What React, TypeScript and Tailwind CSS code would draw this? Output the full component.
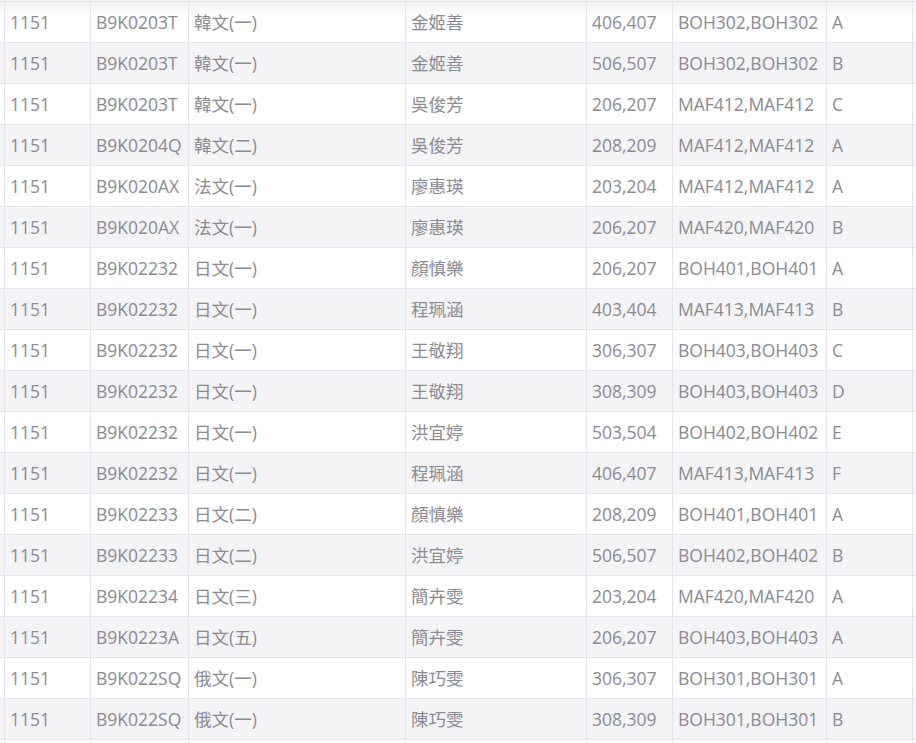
import React from "react";

type Row = [string, string, string, string, string, string, string];

const rows: Row[] = [
  ["1151", "B9K0203T", "韓文(一)", "金姬善", "406,407", "BOH302,BOH302", "A"],
  ["1151", "B9K0203T", "韓文(一)", "金姬善", "506,507", "BOH302,BOH302", "B"],
  ["1151", "B9K0203T", "韓文(一)", "吳俊芳", "206,207", "MAF412,MAF412", "C"],
  ["1151", "B9K0204Q", "韓文(二)", "吳俊芳", "208,209", "MAF412,MAF412", "A"],
  ["1151", "B9K020AX", "法文(一)", "廖惠瑛", "203,204", "MAF412,MAF412", "A"],
  ["1151", "B9K020AX", "法文(一)", "廖惠瑛", "206,207", "MAF420,MAF420", "B"],
  ["1151", "B9K02232", "日文(一)", "顏慎樂", "206,207", "BOH401,BOH401", "A"],
  ["1151", "B9K02232", "日文(一)", "程珮涵", "403,404", "MAF413,MAF413", "B"],
  ["1151", "B9K02232", "日文(一)", "王敬翔", "306,307", "BOH403,BOH403", "C"],
  ["1151", "B9K02232", "日文(一)", "王敬翔", "308,309", "BOH403,BOH403", "D"],
  ["1151", "B9K02232", "日文(一)", "洪宜婷", "503,504", "BOH402,BOH402", "E"],
  ["1151", "B9K02232", "日文(一)", "程珮涵", "406,407", "MAF413,MAF413", "F"],
  ["1151", "B9K02233", "日文(二)", "顏慎樂", "208,209", "BOH401,BOH401", "A"],
  ["1151", "B9K02233", "日文(二)", "洪宜婷", "506,507", "BOH402,BOH402", "B"],
  ["1151", "B9K02234", "日文(三)", "簡卉雯", "203,204", "MAF420,MAF420", "A"],
  ["1151", "B9K0223A", "日文(五)", "簡卉雯", "206,207", "BOH403,BOH403", "A"],
  ["1151", "B9K022SQ", "俄文(一)", "陳巧雯", "306,307", "BOH301,BOH301", "A"],
  ["1151", "B9K022SQ", "俄文(一)", "陳巧雯", "308,309", "BOH301,BOH301", "B"],
  ["", "", "", "", "", "", ""],
];

// column widths incl. right border; a sliver of the previous column on the left
const widths = ["w-[86px]", "w-[98px]", "w-[217px]", "w-[181px]", "w-[86px]", "w-[154px]", "w-[86px]"];

export default function App() {
  return (
    <div
      className="relative h-[743px] w-[916px] overflow-hidden bg-white text-[17.5px] text-[#8a8a92]"
      style={{ fontFamily: '"Segoe UI", "Open Sans", "Noto Sans CJK TC", sans-serif' }}
    >
      <div className="border-t border-[#dcdce3] mt-px">
        {rows.map((r, i) => (
          <div
            key={i}
            className={`flex h-[41px] border-b border-[#e4e4ea] ${i % 2 === 1 ? "bg-[#f4f4f6]" : "bg-white"}`}
          >
            <div className="w-[5px] shrink-0 border-r border-[#e4e4ea]" />
            {r.map((c, j) => (
              <div
                key={j}
                className={`${widths[j]} shrink-0 border-r border-[#e4e4ea] pl-[5px] flex items-center whitespace-nowrap overflow-hidden`}
              >
                {c}
              </div>
            ))}
            <div className="flex-1" />
          </div>
        ))}
      </div>
      {/* header shadow */}
      <div className="pointer-events-none absolute left-0 right-0 top-0 h-[16px] bg-gradient-to-b from-[#e9e9ee] to-transparent opacity-70" />
    </div>
  );
}
